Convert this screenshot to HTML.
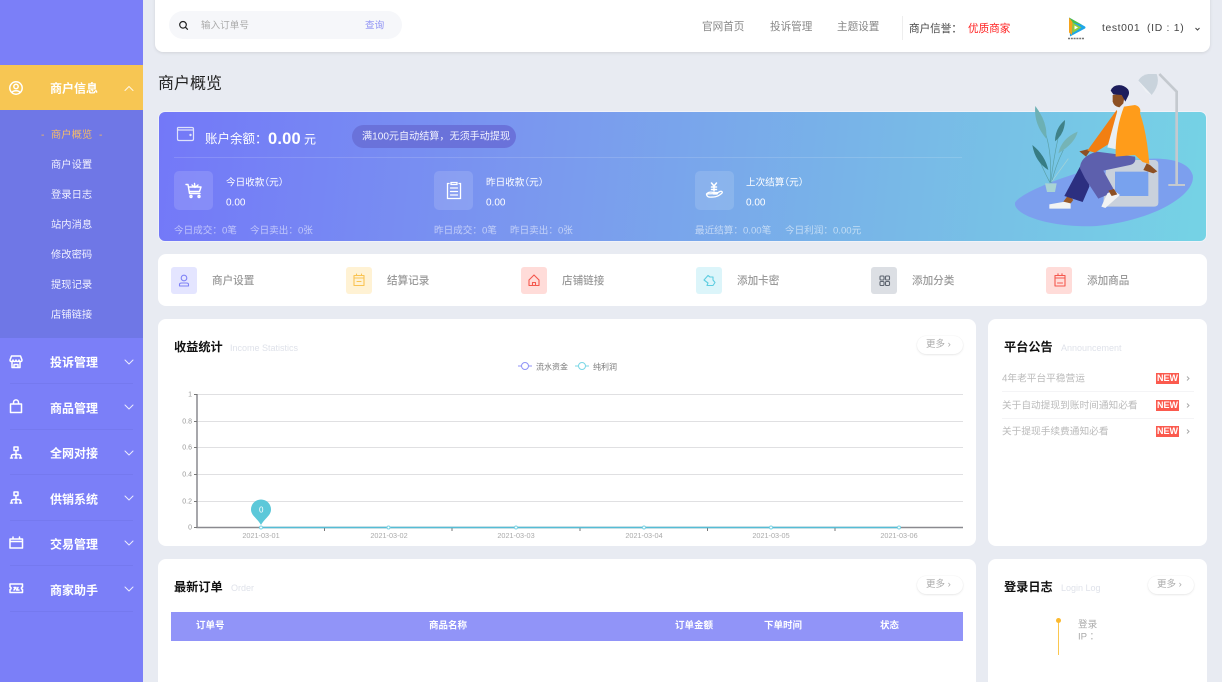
<!DOCTYPE html>
<html lang="zh"><head><meta charset="utf-8"><title>商户概览</title>
<style>
*{box-sizing:border-box}
html,body{margin:0;padding:0;width:1222px;height:682px;overflow:hidden}
body{background:#e8ebf2;font-family:"Liberation Sans","Noto Sans CJK SC",sans-serif}
#p{position:relative;width:1222px;height:682px;overflow:hidden;background:#e8ebf2}
.t{position:absolute;white-space:nowrap;line-height:1;transform:translateY(calc(-50% + 1.300px))}
.b{position:absolute}
.card{position:absolute;background:#fff;border-radius:8px}
svg{position:absolute;overflow:visible}
.m{left:50px;font-size:12px;font-weight:700;color:#fff;transform:translateY(calc(-50% + .5px))}
.s{left:51px;font-size:10.3px;color:#f0f0ff}
.sep{position:absolute;left:10px;width:123px;height:1px;background:#7579ef}
.q{font-size:10.6px;color:#999;font-weight:500}
.qi{position:absolute;top:267px;width:26px;height:27px;border-radius:3px}
.si{position:absolute;top:171px;width:39px;height:39px;border-radius:5px;background:rgba(255,255,255,.13)}
.w1{font-size:9.6px;color:#fff;font-feature-settings:"halt"}
.w2{font-size:10px;color:#fff}
.w3{font-size:9.6px;color:rgba(255,255,255,.55)}
.h{font-size:12.2px;font-weight:700;color:#111}
.en{font-size:9px;color:#dfe2ea}
.more{position:absolute;width:46px;height:18px;border-radius:9px;background:#fff;box-shadow:0 1px 2px rgba(0,0,0,.08),0 0 1px rgba(0,0,0,.1);font-size:9.5px;color:#aaa;line-height:18px;padding-left:9px;white-space:nowrap}
.yl{position:absolute;width:30px;text-align:right;left:162px;font-size:7px;line-height:1;color:#999;transform:translateY(calc(-50% + 1px))}
.xl{position:absolute;width:70px;text-align:center;font-size:7.3px;line-height:1;color:#aaa;top:532px}
.n{left:1002px;font-size:9.7px;color:#bbb}
.new{position:absolute;left:1156px;width:23px;height:11px;background:#fb5a4e;color:#fff;font-size:9px;font-weight:700;line-height:11px;text-align:center}
.th{font-size:9.5px;font-weight:700;color:#fff}
</style></head>
<body>
<div id="p">
<!-- sidebar -->
<div class="b" style="left:0;top:0;width:143px;height:682px;background:#7b7ff8"></div>
<div class="b" style="left:0;top:65px;width:143px;height:45px;background:#f7c653"></div>
<div class="b" style="left:0;top:110px;width:143px;height:228px;background:#6f77e6"></div>
<div class="t m" style="top:88px">商户信息</div>
<svg style="left:0;top:0" width="143" height="682" fill="none" stroke="#fff" stroke-width="1.500" stroke-linecap="round" stroke-linejoin="round">
<circle cx="16" cy="88" r="6.200"/><circle cx="16" cy="86.500" r="2.200"/><path d="M12 92.500c1-2.400 7-2.400 8 0"/>
<g stroke-width="1" stroke-opacity=".85"><path d="M125 90.500l4-4 4 4"/>
<path d="M125 360l4 4 4-4M125 405l4 4 4-4M125 451l4 4 4-4M125 496l4 4 4-4M125 541l4 4 4-4M125 587l4 4 4-4"/></g>
<path d="M11.500 356h9l1.500 4c0 2-3 2-3 0 0 2-3 2-3 0 0 2-3 2-3 0 0 2-3 2-3 0zM12 362v5.500h8V362M14 367v-2.500h4V367"/>
<path d="M10.500 404h11v8.500h-11zM13.500 404v-1.500c0-3.500 5-3.500 5 0v1.500"/>
<path d="M14 447h4v3.500h-4zM16 450.500v3M11.500 458v-2.500c0-1.500 9-1.500 9 0V458M16 453v5M10.500 458h2M15 458h2M19.500 458h2"/>
<path d="M14 492h4v3.500h-4zM16 495.500v3M11.500 503v-2.500c0-1.500 9-1.500 9 0V503M16 498v5M10.500 503h2M15 503h2M19.500 503h2"/>
<path d="M10 539h12.500v9H10zM10 541.500h12.500M13 537v2M19.500 537v2"/>
<path d="M10 584h12.500v3c-1.500.5-1.500 2 0 2.500v3H10v-3c1.500-.5 1.500-2 0-2.500zM14 590l2-2.500h-2M18 587.500l-1.500 2.500h2.500"/>
</svg>
<div class="t" style="left:41px;top:135px;font-size:10.3px;color:#f4b860">-</div>
<div class="t s" style="top:135px;color:#f3bb6b">商户概览</div>
<div class="t" style="left:99px;top:135px;font-size:10.3px;color:#f4b860">-</div>
<div class="t s" style="top:165px">商户设置</div>
<div class="t s" style="top:195px">登录日志</div>
<div class="t s" style="top:225px">站内消息</div>
<div class="t s" style="top:255px">修改密码</div>
<div class="t s" style="top:285px">提现记录</div>
<div class="t s" style="top:315px">店铺链接</div>
<div class="t m" style="top:362px">投诉管理</div><div class="sep" style="top:383px"></div>
<div class="t m" style="top:407.500px">商品管理</div><div class="sep" style="top:429px"></div>
<div class="t m" style="top:453px">全网对接</div><div class="sep" style="top:474px"></div>
<div class="t m" style="top:498.500px">供销系统</div><div class="sep" style="top:520px"></div>
<div class="t m" style="top:544px">交易管理</div><div class="sep" style="top:565px"></div>
<div class="t m" style="top:589.500px">商家助手</div><div class="sep" style="top:611px"></div>

<!-- header -->
<div class="card" style="left:155px;top:-10px;width:1055px;height:62px;box-shadow:0 1px 3px rgba(0,0,0,.1)"></div>
<div class="b" style="left:169px;top:11px;width:233px;height:28px;border-radius:14px;background:#f6f7fa"></div>
<svg style="left:178px;top:20px" width="11" height="11" fill="none" stroke="#222" stroke-width="1.200" stroke-linecap="round"><circle cx="5" cy="4.800" r="3.300"/><path d="M7.500 7.300l2 2"/></svg>
<div class="t" style="left:201px;top:25px;font-size:9.6px;color:#aaa">输入订单号</div>
<div class="t" style="left:365px;top:25px;font-size:9.6px;color:#8f92f4">查询</div>
<div class="t" style="left:702px;top:26px;font-size:10.6px;color:#888">官网首页</div>
<div class="t" style="left:770px;top:26px;font-size:10.6px;color:#888">投诉管理</div>
<div class="t" style="left:837px;top:26px;font-size:10.6px;color:#888">主题设置</div>
<div class="b" style="left:902px;top:16px;width:1px;height:24px;background:#eee"></div>
<div class="t" style="left:909px;top:28px;font-size:10.6px;color:#444">商户信誉：</div>
<div class="t" style="left:968px;top:28px;font-size:10.6px;color:#f22">优质商家</div>
<svg style="left:1067px;top:17px" width="19" height="23">
<path d="M2 0.500L18 9.500Q19 10.500 18 11.500L3 19.500Z" fill="#1fa6e8"/>
<path d="M2 0.500L15 7.800L5.500 5.500Z" fill="#47c04a"/>
<path d="M2 0.500L5.500 5L5 18L2 15.500Z" fill="#f5a31c"/>
<path d="M5.500 5.500L14.500 10.500L5.500 16Z" fill="#8fce3a"/>
<path d="M7.500 8.500L11 10.500L7.500 12.500Z" fill="#fff"/>
<path d="M1 21.500h16" stroke="#777" stroke-width="1.500" stroke-dasharray="2 .8"/>
</svg>
<div class="t" style="left:1102px;top:28px;font-size:10.4px;color:#444;letter-spacing:.6px">test001</div>
<div class="t" style="left:1147px;top:28px;font-size:10.4px;color:#444;letter-spacing:.7px">(ID : 1)</div>
<svg style="left:1194px;top:27px" width="7" height="5" fill="none" stroke="#444" stroke-width="1"><path d="M1.500 1l2 2 2-2"/></svg>

<div class="t" style="left:158px;top:82.500px;font-size:16px;color:#222">商户概览</div>

<!-- balance card -->
<div class="b" style="left:158px;top:111px;width:1049px;height:131px;border-radius:7px;background:linear-gradient(96deg,#7378f8 0%,#7a97ef 35%,#78b8e7 70%,#75d3e5 100%);border:1px solid #f0f2f8"></div>
<svg style="left:176px;top:125px" width="19" height="17" fill="none" stroke="#dfe2fb" stroke-width="1.200"><path d="M2 2.500h14c1 0 1.500.5 1.500 1.500v10c0 1-.5 1.500-1.500 1.500H3c-1 0-1.500-.5-1.500-1.500V3zM1.500 3.500c0 1 .5 1.500 1.500 1.500h14.500"/><circle cx="14.500" cy="10" r=".6"/></svg>
<div class="t" style="left:205px;top:138px;font-size:12.500px;color:#fff">账户余额：</div>
<div class="t" style="left:268px;top:137.500px;font-size:16.500px;font-weight:700;color:#fff;letter-spacing:.2px">0.00</div>
<div class="t" style="left:304px;top:138px;font-size:12px;color:#fff">元</div>
<div class="b" style="left:352px;top:125px;width:164px;height:23px;border-radius:12px;background:#6a72da"></div>
<div class="t" style="left:362px;top:135.500px;font-size:10.100px;color:#f2f3ff">满100元自动结算，无须手动提现</div>
<div class="b" style="left:174px;top:157px;width:788px;height:1px;background:rgba(255,255,255,.14)"></div>
<div class="si" style="left:174px"></div><div class="si" style="left:434px"></div><div class="si" style="left:695px"></div>
<svg style="left:185px;top:182px" width="18" height="18" fill="none" stroke="#fff" stroke-width="1.400" stroke-linecap="round" stroke-linejoin="round"><path d="M1 2.500h2l1.500 9h10.500M4 5h12l-1.500 4.500H5M9.500 1.500l.5 3.500M7 3l3 2.500L13 3"/><circle cx="6" cy="14.500" r="1"/><circle cx="14" cy="14.500" r="1"/></svg>
<svg style="left:445px;top:181px" width="18" height="20" fill="none" stroke="#fff" stroke-width="1.300" stroke-linecap="round"><path d="M4 2.500H2.500v15h13v-15H14M6 1.500h6v2H6zM5.500 7h7M5.500 10.500h7M5.500 14h7"/></svg>
<svg style="left:705px;top:181px" width="19" height="19" fill="none" stroke="#fff" stroke-width="1.300" stroke-linecap="round" stroke-linejoin="round"><path d="M1.500 13c2-2.500 5-2 7-1.500h3c1.500 0 1.500 1.500 0 1.500h-3M11 12.500l4-2c2-.8 3 .8 1.500 2-2 1.800-5 3.500-8 3.500-3 0-6.500 1-7-3z"/><path d="M6.500 2l2.500 3 2.500-3M6.500 6h5M6.500 8.500h5M9 5v5" stroke-width="1.500"/></svg>
<div class="t w1" style="left:226px;top:181.500px">今日收款（元）</div><div class="t w2" style="left:226px;top:201.500px">0.00</div>
<div class="t w1" style="left:486px;top:181.500px">昨日收款（元）</div><div class="t w2" style="left:486px;top:201.500px">0.00</div>
<div class="t w1" style="left:746px;top:181.500px">上次结算（元）</div><div class="t w2" style="left:746px;top:201.500px">0.00</div>
<div class="t w3" style="left:174px;top:230px">今日成交：0笔</div><div class="t w3" style="left:250px;top:230px">今日卖出：0张</div>
<div class="t w3" style="left:434px;top:230px">昨日成交：0笔</div><div class="t w3" style="left:510px;top:230px">昨日卖出：0张</div>
<div class="t w3" style="left:695px;top:230px">最近结算：0.00笔</div><div class="t w3" style="left:785px;top:230px">今日利润：0.00元</div>

<!-- illustration -->
<svg style="left:1000px;top:60px" width="222" height="180" viewBox="0 0 666 540">
<path d="M45 428C60 400 200 340 340 312C440 288 560 285 578 345C590 400 470 480 290 498C170 505 40 470 45 428Z" fill="#7c9fee"/>
<path d="M530 375V95L478 42" fill="none" stroke="#c4c9cf" stroke-width="8"/><path d="M505 375h50" stroke="#c4c9cf" stroke-width="6"/>
<path d="M415 62Q425 45 445 42L470 42Q482 72 455 105Z" fill="#c9d3dc"/><path d="M415 62L455 105L438 96Z" fill="#eef1f5"/>
<path d="M320 300H462Q475 300 475 313V428Q475 440 462 440H322Q310 440 310 428Z" fill="#c9d1dc"/><rect x="345" y="335" width="100" height="73" fill="#78a2ee"/>
<g fill="none" stroke="#5aa0a8" stroke-width="2"><path d="M150 368Q160 250 115 170M152 368Q160 300 175 230M155 368Q165 320 190 270M150 368Q125 320 110 280"/><path d="M155 365L205 296" stroke="#a9d4d6"/></g>
<path d="M106 138Q145 190 138 235Q100 190 106 138Z" fill="#6cb0b4"/>
<path d="M195 180Q195 220 165 244Q165 205 195 180Z" fill="#3f8188"/>
<path d="M233 215Q225 250 175 280Q185 235 233 215Z" fill="#75b4b6"/>
<path d="M97 255Q135 285 145 330Q105 305 97 255Z" fill="#377c84"/>
<path d="M135 370H170L165 396H141Z" fill="#a9d3d4"/>
<path d="M148 433L195 425L212 430V446H148Z" fill="#f2f3f3"/>
<path d="M190 425L205 405L220 420L212 430Z" fill="#9a5a28"/>
<path d="M240 320L262 308L268 380L248 426L193 408Z" fill="#2c2f80"/>
<path d="M240 325Q240 290 290 275L405 290Q410 310 390 315L310 332L345 395L295 416L255 355Z" fill="#5d60ad"/>
<path d="M322 400L340 390L360 405L316 444L304 440Z" fill="#f2f3f3"/>
<path d="M325 392L342 387L352 403L335 408Z" fill="#8d5023"/>
<path d="M238 274L262 268L272 270L258 290Z" fill="#8d5023"/>
<path d="M262 272L350 150L362 180L345 240L285 278Z" fill="#f27f12"/>
<path d="M355 142L370 142L350 268L322 262Z" fill="#e9eff3"/>
<path d="M372 140L405 135Q425 140 420 160Q440 215 448 312L428 306L405 285L347 290Q345 210 372 140Z" fill="#ff9c1a"/>
<path d="M440 310L430 330L460 340L472 334L450 315Z" fill="#8d5023"/>
<path d="M338 105L375 100L370 130L358 142Q342 140 338 125Z" fill="#8d5023"/>
<path d="M332 92Q340 72 365 76Q392 85 386 105L376 125L365 105L340 103Z" fill="#1d1d5c"/>
</svg>

<!-- quick row -->
<div class="card" style="left:158px;top:254px;width:1049px;height:52px"></div>
<div class="qi" style="left:171px;background:#e4e5ff"></div>
<div class="qi" style="left:346px;background:#fff2d4"></div>
<div class="qi" style="left:521px;background:#ffdcd9"></div>
<div class="qi" style="left:696px;background:#dcf5fa"></div>
<div class="qi" style="left:871px;background:#dcdfe4"></div>
<div class="qi" style="left:1046px;background:#ffdcd9"></div>
<svg style="left:0;top:0" width="1222" height="682" fill="none" stroke-width="1.100" stroke-linecap="round" stroke-linejoin="round">
<g stroke="#7f82f6"><circle cx="184" cy="278" r="2.800"/><path d="M179.500 286v-1.500c0-1 1-1.500 2-1.500h5c1 0 2 .5 2 1.500v1.500z"/></g>
<g stroke="#f9c453"><path d="M354 275.500h10v10h-10zM354 278h10M356.500 274v1.500M361.500 274v1.500M357 281.500h4"/></g>
<g stroke="#f4584e"><path d="M529 280l5-5 5 5v5.500h-10zM532.500 285.500v-3h3v3"/></g>
<g stroke="#5ecde0"><path d="M704 280l4-4.500 2 1.500h3v3l2 2.500-2 3h-6l1-2.500z"/></g>
<g stroke="#5e6570"><rect x="880" y="276" width="4" height="4" rx="1"/><rect x="885.500" y="276" width="4" height="4" rx="1"/><rect x="880" y="281.500" width="4" height="4" rx="1"/><rect x="885.500" y="281.500" width="4" height="4" rx="1"/></g>
<g stroke="#f4584e"><path d="M1055 275.500h10v10.500h-10zM1055 278h10M1058 273.800v1.700M1062 273.800v1.700M1057.500 283h5"/></g>
</svg>
<div class="t q" style="left:212px;top:280px">商户设置</div>
<div class="t q" style="left:387px;top:280px">结算记录</div>
<div class="t q" style="left:562px;top:280px">店铺链接</div>
<div class="t q" style="left:737px;top:280px">添加卡密</div>
<div class="t q" style="left:912px;top:280px">添加分类</div>
<div class="t q" style="left:1087px;top:280px">添加商品</div>

<!-- chart card -->
<div class="card" style="left:158px;top:319px;width:818px;height:227px"></div>
<div class="t h" style="left:174px;top:345.500px">收益统计</div>
<div class="t en" style="left:230px;top:346.500px">Income Statistics</div>
<div class="more" style="left:917px;top:336px">更多 ›</div>
<svg style="left:0;top:0" width="1222" height="682" fill="none">
<path d="M518 366h14" stroke="#9093f7"/><circle cx="525" cy="366" r="3.500" fill="#fff" stroke="#9093f7"/>
<path d="M575 366h14" stroke="#7ad7e6"/><circle cx="582" cy="366" r="3.500" fill="#fff" stroke="#7ad7e6"/>
<path d="M197 394.500H963M197 421.500H963M197 447.500H963M197 474.500H963M197 501.500H963" stroke="#e0e0e2"/>
<path d="M197 394V527.500H963" stroke="#8a8a8f" stroke-width="1.500"/>
<path d="M194 394.500h3M194 421.500h3M194 447.500h3M194 474.500h3M194 501.500h3M194 527.500h3M324.500 527v4M452 527v4M580 527v4M707.500 527v4M835 527v4" stroke="#777"/>
<path d="M261 527.500H899" stroke="#55bdd6" stroke-width="1.600"/>
<g fill="#fff" stroke="#7bd3e4" stroke-width="1"><circle cx="388.500" cy="527.500" r="1.500"/><circle cx="516" cy="527.500" r="1.500"/><circle cx="644" cy="527.500" r="1.500"/><circle cx="771" cy="527.500" r="1.500"/><circle cx="899" cy="527.500" r="1.500"/><circle cx="261" cy="527.500" r="1.500"/></g>
<path d="M261 525C257 518 251 515.500 251 509.500A10 10 0 0 1 271 509.500C271 515.500 265 518 261 525Z" fill="#5cc8d9"/>
</svg>
<div class="t" style="left:259px;top:508.500px;font-size:8px;color:#fff">0</div>
<div class="t" style="left:536px;top:365.500px;font-size:8px;color:#777">流水资金</div>
<div class="t" style="left:593px;top:365.500px;font-size:8px;color:#777">纯利润</div>
<div class="yl" style="top:394px">1</div><div class="yl" style="top:421px">0.8</div><div class="yl" style="top:447px">0.6</div><div class="yl" style="top:474px">0.4</div><div class="yl" style="top:501px">0.2</div><div class="yl" style="top:527px">0</div>
<div class="xl" style="left:226px">2021-03-01</div><div class="xl" style="left:354px">2021-03-02</div><div class="xl" style="left:481px">2021-03-03</div><div class="xl" style="left:609px">2021-03-04</div><div class="xl" style="left:736px">2021-03-05</div><div class="xl" style="left:864px">2021-03-06</div>

<!-- notice -->
<div class="card" style="left:988px;top:319px;width:219px;height:227px"></div>
<div class="t h" style="left:1004px;top:345.500px">平台公告</div>
<div class="t en" style="left:1061px;top:346.500px">Announcement</div>
<div class="t n" style="top:378px">4年老平台平稳营运</div>
<div class="t n" style="top:405px">关于自动提现到账时间通知必看</div>
<div class="t n" style="top:431px">关于提现手续费通知必看</div>
<div class="b" style="left:1002px;top:391px;width:192px;height:1px;background:#f4f4f6"></div>
<div class="b" style="left:1002px;top:418px;width:192px;height:1px;background:#f4f4f6"></div>
<div class="new" style="top:373px">NEW</div><div class="new" style="top:400px">NEW</div><div class="new" style="top:426px">NEW</div>
<svg style="left:0;top:0" width="1222" height="682" fill="none" stroke="#aaa" stroke-width="1"><path d="M1187 376.500l2 2-2 2M1187 403.500l2 2-2 2M1187 429.500l2 2-2 2"/></svg>

<!-- orders -->
<div class="card" style="left:158px;top:559px;width:818px;height:140px"></div>
<div class="t h" style="left:174px;top:585.500px">最新订单</div>
<div class="t en" style="left:231px;top:586.500px">Order</div>
<div class="more" style="left:917px;top:576px">更多 ›</div>
<div class="b" style="left:171px;top:612px;width:792px;height:28.500px;background:#9194f8"></div>
<div class="t th" style="left:196px;top:625px">订单号</div>
<div class="t th" style="left:429px;top:625px">商品名称</div>
<div class="t th" style="left:675px;top:625px">订单金额</div>
<div class="t th" style="left:764px;top:625px">下单时间</div>
<div class="t th" style="left:880px;top:625px">状态</div>

<!-- login log -->
<div class="card" style="left:988px;top:559px;width:219px;height:140px"></div>
<div class="t h" style="left:1004px;top:585.500px">登录日志</div>
<div class="t en" style="left:1061px;top:586.500px">Login Log</div>
<div class="more" style="left:1148px;top:576px">更多 ›</div>
<div class="b" style="left:1058px;top:622px;width:1px;height:33px;background:#fbc74f"></div>
<div class="b" style="left:1055.500px;top:618px;width:5px;height:5px;border-radius:50%;background:#fbb92f"></div>
<div class="t" style="left:1078px;top:624px;font-size:9.600px;color:#aaa">登录</div>
<div class="t" style="left:1078px;top:636px;font-size:9.600px;color:#aaa">IP ：</div>
</div>
</body></html>
